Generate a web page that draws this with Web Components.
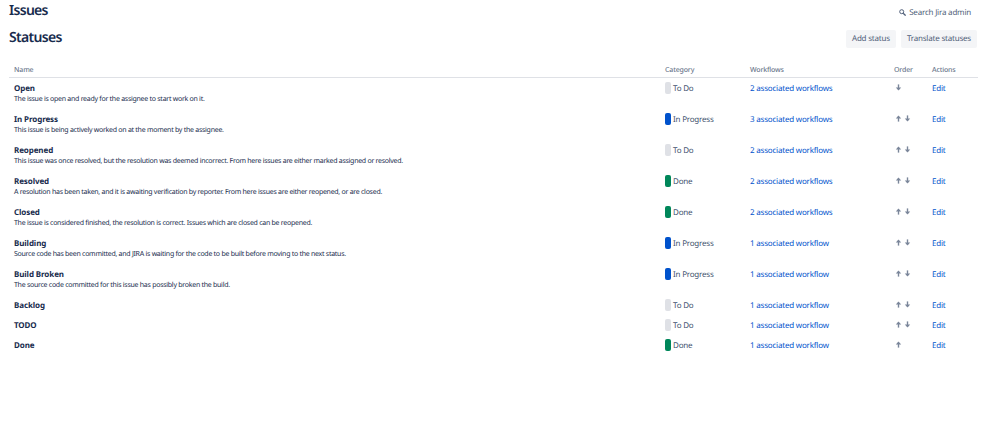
<!DOCTYPE html>
<html>
<head>
<meta charset="utf-8">
<title>Statuses</title>
<style>
    html, body { margin: 0; padding: 0; background: #fff; }
    body { font-family: "Noto Sans", "Open Sans", sans-serif; font-size: 8px; color: #172b4d; text-rendering: geometricPrecision; }
</style>
</head>
<body>
<admin-page>
    <admin-search slot="search">Search Jira admin</admin-search>
    <admin-button slot="actions">Add status</admin-button>
    <admin-button slot="actions">Translate statuses</admin-button>
    <status-table>
        <status-row name="Open" category="todo" workflows="2 associated workflows" order="down">The issue is open and ready for the assignee to start work on it.</status-row>
        <status-row name="In Progress" category="progress" workflows="3 associated workflows" order="both">This issue is being actively worked on at the moment by the assignee.</status-row>
        <status-row name="Reopened" category="todo" workflows="2 associated workflows" order="both">This issue was once resolved, but the resolution was deemed incorrect. From here issues are either marked assigned or resolved.</status-row>
        <status-row name="Resolved" category="done" workflows="2 associated workflows" order="both">A resolution has been taken, and it is awaiting verification by reporter. From here issues are either reopened, or are closed.</status-row>
        <status-row name="Closed" category="done" workflows="2 associated workflows" order="both">The issue is considered finished, the resolution is correct. Issues which are closed can be reopened.</status-row>
        <status-row name="Building" category="progress" workflows="1 associated workflow" order="both">Source code has been committed, and JIRA is waiting for the code to be built before moving to the next status.</status-row>
        <status-row name="Build Broken" category="progress" workflows="1 associated workflow" order="both">The source code committed for this issue has possibly broken the build.</status-row>
        <status-row name="Backlog" category="todo" workflows="1 associated workflow" order="both"></status-row>
        <status-row name="TODO" category="todo" workflows="1 associated workflow" order="both"></status-row>
        <status-row name="Done" category="done" workflows="1 associated workflow" order="up"></status-row>
    </status-table>
</admin-page>

<script>
const COLUMNS = "651px 85px 144px 38px 51px";
const ARROW_UP = `<svg width="7" height="7" viewBox="0 0 7 7"><path d="M3.5 6.6V1.6" stroke="#7a869a" stroke-width="1.4"/><path d="M3.5 .4L6.2 3.4H.8Z" fill="#7a869a"/></svg>`;
const ARROW_DOWN = `<svg width="7" height="7" viewBox="0 0 7 7"><path d="M3.5 .4V5.4" stroke="#7a869a" stroke-width="1.4"/><path d="M3.5 6.6L6.2 3.6H.8Z" fill="#7a869a"/></svg>`;

class AdminPage extends HTMLElement {
    constructor() {
        super();
        this.attachShadow({mode: "open"}).innerHTML = `
            <style>
                :host { display: block; padding: 1px 21px 0 9px; height: 424px; box-sizing: border-box; overflow: hidden; }
                .top { display: flex; justify-content: space-between; align-items: center; height: 20px; }
                h1, h2 { margin: 0; font-weight: 600; color: #172b4d; font-size: 14px; line-height: 20px; letter-spacing: -0.7px; }
                .title { display: flex; justify-content: space-between; align-items: center; margin-top: 7px; margin-bottom: 14px; height: 20px; }
                .actions { display: flex; gap: 5px; margin-right: 1px; padding-top: 2px; }
            </style>
            <div class="top"><h1>Issues</h1><slot name="search"></slot></div>
            <div class="title"><h2>Statuses</h2><div class="actions"><slot name="actions"></slot></div></div>
            <slot></slot>
        `;
    }
}

class AdminSearch extends HTMLElement {
    constructor() {
        super();
        this.attachShadow({mode: "open"}).innerHTML = `
            <style>
                :host { display: flex; align-items: center; gap: 3px; font-size: 8px; letter-spacing: -0.2px; color: #505f79; padding: 3px 7px 0 0; }
            </style>
            <svg width="7" height="7" viewBox="0 0 7 7"><circle cx="2.7" cy="2.7" r="2" fill="none" stroke="#505f79" stroke-width="1"/><path d="M4.2 4.2L6.6 6.6" stroke="#505f79" stroke-width="1.3"/></svg>
            <slot></slot>
        `;
    }
}

class AdminButton extends HTMLElement {
    constructor() {
        super();
        this.attachShadow({mode: "open"}).innerHTML = `
            <style>
                :host { display: block; background: #f4f5f7; color: #505f79; border-radius: 2px; font-size: 8px; letter-spacing: -0.2px; line-height: 18px; padding: 0 6px; }
            </style>
            <slot></slot>
        `;
    }
}

class StatusTable extends HTMLElement {
    constructor() {
        super();
        this.attachShadow({mode: "open"}).innerHTML = `
            <style>
                :host { display: block; width: 969px; }
                .head { display: grid; grid-template-columns: ${COLUMNS}; padding-top: 2px; height: 13px; margin-bottom: 1px; border-bottom: 1px solid #dfe1e6; font-size: 7px; font-weight: 500; letter-spacing: -0.15px; color: #6b778c; line-height: 14px; }
                .head div { padding-left: 5px; }
            </style>
            <div class="head"><div>Name</div><div>Category</div><div>Workflows</div><div>Order</div><div>Actions</div></div>
            <slot></slot>
        `;
    }
}

class StatusRow extends HTMLElement {
    connectedCallback() {
        if (this.shadowRoot) return;
        const order = this.getAttribute("order");
        const hasDesc = this.textContent.trim() !== "";
        const labels = {todo: "To Do", progress: "In Progress", done: "Done"};
        const category = this.getAttribute("category");
        this.attachShadow({mode: "open"}).innerHTML = `
            <style>
                :host { display: grid; grid-template-columns: ${COLUMNS}; height: ${hasDesc ? 31 : 20}px; font-size: 8px; letter-spacing: -0.2px; line-height: 12px; color: #172b4d; }
                .cell { padding: 4px 0 0 5px; }
                .name { font-weight: 700; font-size: 8px; letter-spacing: -0.1px; }
                .desc { font-size: 7px; letter-spacing: -0.27px; line-height: 10px; }
                a { color: #0052cc; text-decoration: none; }
                status-lozenge { vertical-align: top; }
                .order { display: flex; gap: 2px; padding: 2px 0 0 6px; height: 12px; align-items: center; }
            </style>
            <div class="cell"><div class="name">${this.getAttribute("name")}</div><div class="desc"><slot></slot></div></div>
            <div class="cell"><status-lozenge category="${category}">${labels[category]}</status-lozenge></div>
            <div class="cell"><a href="#">${this.getAttribute("workflows")}</a></div>
            <div class="cell order">${order !== "down" ? ARROW_UP : ""}${order !== "up" ? ARROW_DOWN : ""}</div>
            <div class="cell"><a href="#">Edit</a></div>
        `;
    }
}

class StatusLozenge extends HTMLElement {
    constructor() {
        super();
        const colors = {todo: "#dfe1e6", progress: "#0052cc", done: "#00875a"};
        this.attachShadow({mode: "open"}).innerHTML = `
            <style>
                :host { display: inline-flex; align-items: center; gap: 2px; color: #42526e; }
                i { display: block; width: 6px; height: 12px; margin-top: -2px; border-radius: 2px; background: ${colors[this.getAttribute("category")]}; }
            </style>
            <i></i><slot></slot>
        `;
    }
}

window.customElements.define("status-lozenge", StatusLozenge);
window.customElements.define("status-row", StatusRow);
window.customElements.define("status-table", StatusTable);
window.customElements.define("admin-button", AdminButton);
window.customElements.define("admin-search", AdminSearch);
window.customElements.define("admin-page", AdminPage);
</script>
</body>
</html>
